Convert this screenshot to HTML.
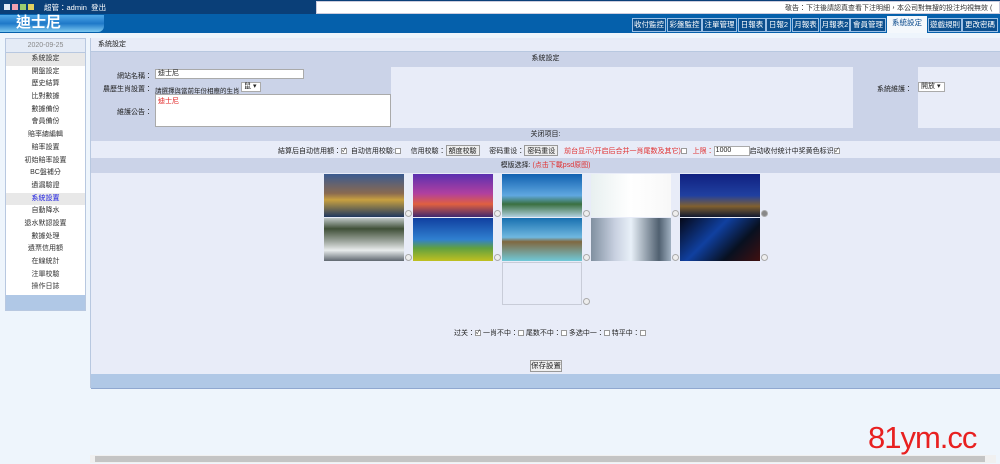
<!DOCTYPE html>
<html><head><meta charset="utf-8">
<style>
*{margin:0;padding:0;box-sizing:border-box}
body{width:1000px;height:464px;overflow:hidden;background:#eef5fc;font-family:"Liberation Sans","Noto Sans CJK TC",sans-serif;font-size:7px;color:#222;position:relative}
.a{position:absolute}
.top{left:0;top:0;width:1000px;height:14px;background:#0a3f78}
.bar{left:0;top:14px;width:1000px;height:19px;background:#0560ab}
.tab{position:absolute;top:18px;height:14px;background:#0b4f8e;border:1px solid #9cc0e6;color:#fff;font-size:7.5px;line-height:12px;text-align:center}
.side{left:5px;top:38px;width:81px;height:273px;background:#fff;border:1px solid #b8c8e0}
.side div{height:12.7px;line-height:12.7px;text-align:center;font-size:7px;color:#333}
.img{position:absolute;width:80px;height:43px}
.rad{position:absolute;width:7px;height:7px;border-radius:50%;border:1px solid #aaa;background:#eee}
.cb{display:inline-block;width:6px;height:6px;border:1px solid #999;background:#fff;vertical-align:middle;font-size:6px;line-height:5px;text-align:center}
</style></head><body>
<div class="a top"></div>
<div class="a" style="left:4px;top:4px;width:6px;height:6px;background:#dde8f5"></div>
<div class="a" style="left:12px;top:4px;width:6px;height:6px;background:#f0a0b0"></div>
<div class="a" style="left:20px;top:4px;width:6px;height:6px;background:#9ccc70"></div>
<div class="a" style="left:28px;top:4px;width:6px;height:6px;background:#e0d060"></div>
<div class="a" style="left:44px;top:2px;color:#fff;font-size:7.5px">超管：admin&nbsp;&nbsp;登出</div>
<div class="a" style="left:316px;top:1px;width:684px;height:13px;background:#fff;border:1px solid #ccd"></div>
<div class="a" style="left:785px;top:3px;font-size:7px;color:#333;white-space:nowrap">敬告：下注後請認真查看下注明細，本公司對無搜的投注均視無效 (</div>
<div class="a bar"></div>
<div class="a" style="left:0;top:15px;width:104px;height:17px;border-radius:0 0 6px 0;background:linear-gradient(180deg,#4fa8e8,#1e78c8 50%,#7cc8f0);"></div>
<div class="a" style="left:16px;top:14px;color:#fff;font-size:15px;font-weight:bold;line-height:18px">迪士尼</div>
<div class="tab" style="left:632px;width:34px">收付監控</div>
<div class="tab" style="left:667px;width:35px">彩盤監控</div>
<div class="tab" style="left:702px;width:35px">注單管理</div>
<div class="tab" style="left:738px;width:28px">日報表</div>
<div class="tab" style="left:766px;width:25px">日報2</div>
<div class="tab" style="left:792px;width:27px">月報表</div>
<div class="tab" style="left:820px;width:30px">月報表2</div>
<div class="tab" style="left:850px;width:36px">會員管理</div>
<div class="tab" style="left:887px;width:40px;top:16px;height:17px;background:#f4f8fc;color:#0a4a8c;border-color:#f4f8fc">系統設定</div>
<div class="tab" style="left:928px;width:34px">遊戲規則</div>
<div class="tab" style="left:962px;width:36px">更改密碼</div>

<div class="a side">
<div style="background:#e4ebf6;color:#888;height:14px;line-height:14px;border-bottom:1px solid #b8c8e0">2020-09-25</div>
<div style="background:#e8e8e8">系統設定</div>
<div>開盤設定</div><div>歷史結算</div><div>比對數據</div><div>數據備份</div><div>會員備份</div><div>賠率總編輯</div><div>賠率設置</div><div>初始賠率設置</div><div>BC盤補分</div><div>遺漏驗證</div>
<div style="background:#e8e8e8;color:#2020e0">系統設置</div>
<div>自動降水</div><div>退水默認設置</div><div>數據处理</div><div>遺票信用額</div><div>在線統計</div><div>注單校驗</div><div>操作日誌</div>
<div style="position:absolute;left:0;bottom:0;width:79px;height:15px;background:#b0c8e6"></div>
</div>

<div class="a" style="left:90px;top:38px;width:910px;height:350px;background:#e8ecf8;border-left:1px solid #b8c8e0"></div>
<div class="a" style="left:90px;top:38px;width:910px;height:14px;border-bottom:1px solid #b8c8e0;line-height:13px;padding-left:8px">系統設定</div>
<div class="a" style="left:91px;top:52px;width:909px;height:15px;background:#cbd3e8;text-align:center;line-height:14px">系統設定</div>
<div class="a" style="left:91px;top:67px;width:300px;height:61px;background:#cbd3e8"></div>
<div class="a" style="left:853px;top:67px;width:65px;height:61px;background:#cbd3e8"></div>
<div class="a" style="left:100px;top:71px;width:52px;text-align:right">網站名稱：</div>
<div class="a" style="left:155px;top:69px;width:149px;height:10px;background:#fff;border:1px solid #aaa;padding-left:2px;line-height:8px">迪士尼</div>
<div class="a" style="left:100px;top:84px;width:52px;text-align:right">農歷生肖設置：</div>
<div class="a" style="left:155px;top:85px;font-size:6.5px">請選擇與當前年份相應的生肖</div>
<div class="a" style="left:241px;top:82px;width:20px;height:10px;background:#fff;border:1px solid #aaa;font-size:7px;line-height:8px;padding-left:2px">鼠 ▾</div>
<div class="a" style="left:100px;top:107px;width:52px;text-align:right">維護公告：</div>
<div class="a" style="left:155px;top:94px;width:236px;height:33px;background:#fff;border:1px solid #aaa;color:#e02020;padding:1px 2px">迪士尼</div>
<div class="a" style="left:850px;top:84px;width:62px;text-align:right">系統維護：</div>
<div class="a" style="left:918px;top:82px;width:27px;height:10px;background:#fff;border:1px solid #aaa;line-height:8px;padding-left:2px">開放 ▾</div>
<div class="a" style="left:91px;top:128px;width:909px;height:13px;background:#cbd3e8;text-align:center;line-height:13px">关闭项目:</div>
<div class="a" style="left:278px;top:145px;white-space:nowrap;line-height:12px">結算后自动信用額：<span class="cb">✓</span>&nbsp; 自动信用校驗:<span class="cb"></span>&nbsp;&nbsp;&nbsp;&nbsp; 信用校驗：<span style="display:inline-block;border:1px solid #999;background:#eee;padding:0 2px;height:11px">額度校驗</span>&nbsp;&nbsp;&nbsp;&nbsp; 密码重设：<span style="display:inline-block;border:1px solid #999;background:#eee;padding:0 2px;height:11px">密码重设</span>&nbsp;&nbsp; <span style="color:#e03030">前台显示(开启后合并一肖尾数及其它)</span><span class="cb"></span>&nbsp;&nbsp; <span style="color:#e03030">上限：</span><span style="display:inline-block;width:36px;height:10px;background:#fff;border:1px solid #aaa;vertical-align:middle;line-height:8px;padding-left:1px">1000</span>启动收付统计中奖黄色标识<span class="cb">✓</span></div>
<div class="a" style="left:91px;top:158px;width:909px;height:15px;background:#cbd3e8;text-align:center;line-height:15px">模版选择: <span style="color:#e03030">(点击下載psd原图)</span></div>

<div class="img" style="left:324px;top:174px;background:linear-gradient(180deg,#3a5a90,#8a6a50 45%,#c8a040 60%,#203860)"></div>
<div class="img" style="left:413px;top:174px;background:linear-gradient(180deg,#5a30b0,#b040a0 45%,#e06040 70%,#402870)"></div>
<div class="img" style="left:502px;top:174px;background:linear-gradient(180deg,#1060b0,#60a8e0 50%,#3a7040 70%,#b0d0e0)"></div>
<div class="img" style="left:591px;top:174px;background:linear-gradient(90deg,#e8f0f0,#fff 50%,#f8f8f8)"></div>
<div class="img" style="left:680px;top:174px;background:linear-gradient(180deg,#102080,#2040a0 50%,#806030 75%,#101830)"></div>
<div class="img" style="left:324px;top:218px;background:linear-gradient(180deg,#c0c8c8,#405038 25%,#a0a8a0 55%,#e8ecec 75%,#606870)"></div>
<div class="img" style="left:413px;top:218px;background:linear-gradient(180deg,#1040a0,#3080d0 50%,#60a040 70%,#c0c020)"></div>
<div class="img" style="left:502px;top:218px;background:linear-gradient(180deg,#1870b0,#70b8e0 45%,#806840 55%,#70c8d8)"></div>
<div class="img" style="left:591px;top:218px;background:linear-gradient(90deg,#8090a0,#c8d0e0 30%,#e8f0f8 50%,#506070 85%,#a0b0c0)"></div>
<div class="img" style="left:680px;top:218px;background:linear-gradient(135deg,#050818,#1040a0 40%,#081020 70%,#401010)"></div>
<div class="img" style="left:502px;top:262px;height:43px;border:1px solid #c8ccd8"></div>
<div class="rad" style="left:405px;top:210px"></div><div class="rad" style="left:494px;top:210px"></div><div class="rad" style="left:583px;top:210px"></div><div class="rad" style="left:672px;top:210px"></div><div class="rad" style="left:761px;top:210px;background:#888"></div>
<div class="rad" style="left:405px;top:254px"></div><div class="rad" style="left:494px;top:254px"></div><div class="rad" style="left:583px;top:254px"></div><div class="rad" style="left:672px;top:254px"></div><div class="rad" style="left:761px;top:254px"></div>
<div class="rad" style="left:583px;top:298px"></div>

<div class="a" style="left:454px;top:328px;white-space:nowrap">过关：<span class="cb">✓</span> 一肖不中：<span class="cb"></span> 尾数不中：<span class="cb"></span> 多选中一：<span class="cb"></span> 特平中：<span class="cb"></span></div>
<div class="a" style="left:530px;top:360px;width:32px;height:12px;border:1px solid #999;background:#f0f0f0;text-align:center;line-height:10px;font-size:7.5px">保存設置</div>
<div class="a" style="left:91px;top:374px;width:909px;height:15px;background:#b0c8e6;border-bottom:1px solid #90a8d0"></div>

<div class="a" style="left:868px;top:420px;color:#e82020;font-size:31px;line-height:36px;letter-spacing:-1px">81ym.cc</div>
<div class="a" style="left:90px;top:455px;width:906px;height:8px;background:#f0f0f0"></div>
<div class="a" style="left:95px;top:456px;width:890px;height:6px;background:#c4c4c4"></div>
</body></html>
